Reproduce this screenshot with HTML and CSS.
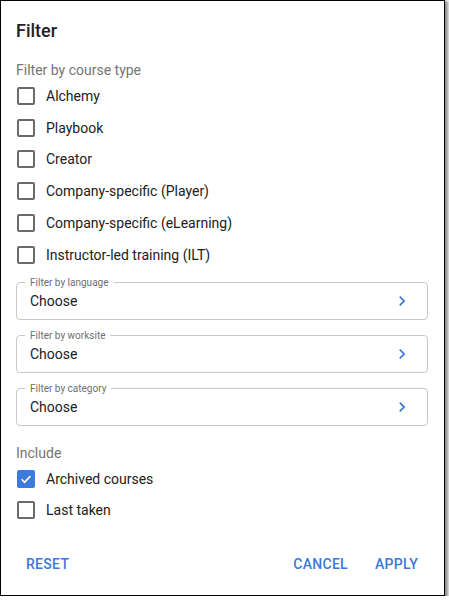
FILE: index.html
```html
<!DOCTYPE html>
<html lang="en">
<head>
<meta charset="utf-8">
<title>Filter</title>
<link rel="stylesheet" href="styles.css">
</head>
<body>
<div class="frame">
  <h1 class="title">Filter</h1>

  <div class="section-label">Filter by course type</div>
  <ul class="checks">
    <li class="check"><span class="box"></span><span class="check-label">Alchemy</span></li>
    <li class="check"><span class="box"></span><span class="check-label">Playbook</span></li>
    <li class="check"><span class="box"></span><span class="check-label">Creator</span></li>
    <li class="check"><span class="box"></span><span class="check-label">Company-specific (Player)</span></li>
    <li class="check"><span class="box"></span><span class="check-label">Company-specific (eLearning)</span></li>
    <li class="check"><span class="box"></span><span class="check-label">Instructor-led training (ILT)</span></li>
  </ul>

  <div class="fields">
    <fieldset class="field">
      <legend class="field-legend">Filter by language</legend>
      <div class="field-row">
        <span class="field-value">Choose</span>
        <svg class="chevron" viewBox="0 0 24 24" width="20" height="20"><path d="M8.59 16.59 13.17 12 8.59 7.41 10 6l6 6-6 6z"/></svg>
      </div>
    </fieldset>
    <fieldset class="field">
      <legend class="field-legend">Filter by worksite</legend>
      <div class="field-row">
        <span class="field-value">Choose</span>
        <svg class="chevron" viewBox="0 0 24 24" width="20" height="20"><path d="M8.59 16.59 13.17 12 8.59 7.41 10 6l6 6-6 6z"/></svg>
      </div>
    </fieldset>
    <fieldset class="field">
      <legend class="field-legend">Filter by category</legend>
      <div class="field-row">
        <span class="field-value">Choose</span>
        <svg class="chevron" viewBox="0 0 24 24" width="20" height="20"><path d="M8.59 16.59 13.17 12 8.59 7.41 10 6l6 6-6 6z"/></svg>
      </div>
    </fieldset>
  </div>

  <div class="section-label include">Include</div>
  <ul class="checks">
    <li class="check"><span class="box checked"><svg viewBox="0 0 24 24" width="18" height="18"><path d="M4.5 12.5l5 5L19.5 7" fill="none" stroke="#fff" stroke-width="2.8"/></svg></span><span class="check-label">Archived courses</span></li>
    <li class="check"><span class="box"></span><span class="check-label">Last taken</span></li>
  </ul>

  <div class="actions">
    <button class="btn">RESET</button>
    <div class="actions-right">
      <button class="btn">CANCEL</button>
      <button class="btn">APPLY</button>
    </div>
  </div>
</div>
</body>
</html>
```
FILE: styles.css
```css
html, body {
  margin: 0;
  padding: 0;
  background: #fff;
}
body {
  font-family: Roboto, "Liberation Sans", Arial, sans-serif;
  color: #212121;
}
.frame {
  box-sizing: border-box;
  width: 445px;
  height: 596px;
  border: 1.5px solid #000;
  background: #fff;
  box-shadow: 2px 2px 3px 1px rgba(0, 0, 0, 0.45);
  padding: 18px 16px 0 15px;
}
.title {
  margin: 0;
  font-size: 18px;
  font-weight: 500;
  line-height: 24px;
  color: #212121;
}
.section-label {
  margin-top: 17px;
  font-size: 14px;
  line-height: 20px;
  color: #757575;
}
.section-label.include {
  margin-top: 17px;
}
.checks {
  list-style: none;
  margin: 0;
  padding: 0;
}
.check {
  display: flex;
  align-items: center;
  height: 31.8px;
  font-size: 14px;
}
.box {
  box-sizing: border-box;
  width: 18px;
  height: 18px;
  margin-left: 1px;
  border: 2px solid #6b6b6b;
  border-radius: 2px;
  display: flex;
  align-items: center;
  justify-content: center;
  flex-shrink: 0;
}
.box.checked {
  background: #3c7ade;
  border-color: #3c7ade;
}
.check-label {
  margin-left: 11px;
  color: #212121;
}
.fields {
  margin-top: 6px;
  display: flex;
  flex-direction: column;
  gap: 10px;
}
.field {
  margin: 0;
  padding: 0 15px 0 13px;
  border: 1px solid #c8c8c8;
  border-radius: 4px;
  min-width: 0;
}
.field-legend {
  font-size: 10px;
  line-height: 12px;
  color: #6f6f6f;
  padding: 0 5px;
  margin-left: -5px;
}
.field-row {
  margin-top: -6px;
  height: 36px;
  display: flex;
  align-items: center;
  justify-content: space-between;
}
.field-value {
  font-size: 14px;
  color: #212121;
}
.chevron {
  fill: #3b78d8;
  display: block;
}
.actions {
  margin-top: 20px;
  display: flex;
  justify-content: space-between;
  align-items: center;
}
.actions-right {
  display: flex;
  gap: 7px;
}
.btn {
  font-family: Roboto, "Liberation Sans", Arial, sans-serif;
  font-size: 14px;
  font-weight: 500;
  letter-spacing: 0.3px;
  color: #3b78d8;
  background: transparent;
  border: none;
  padding: 0 10px;
  height: 36px;
  cursor: pointer;
}
```
